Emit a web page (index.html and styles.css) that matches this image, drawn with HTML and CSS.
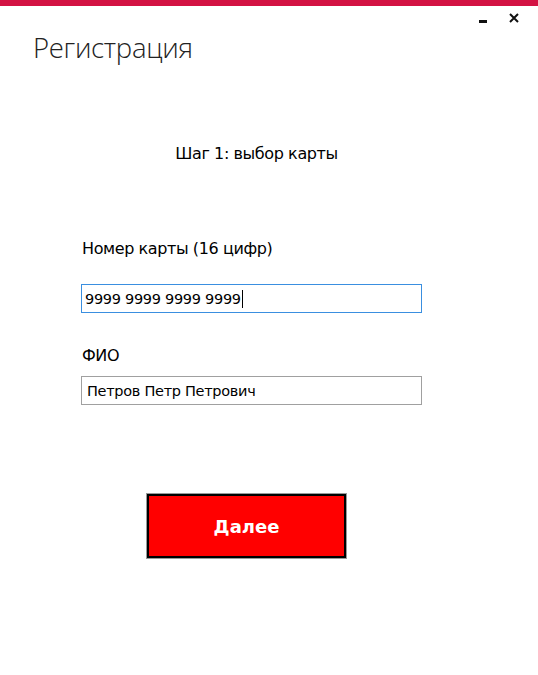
FILE: index.html
```html
<!DOCTYPE html>
<html lang="ru">
<head>
<meta charset="utf-8">
<title>Регистрация</title>
<link rel="stylesheet" href="styles.css">
</head>
<body>
<div class="window">
  <div class="accent"></div>
  <div class="titlebar">
    <h1 class="title">Регистрация</h1>
    <div class="controls">
      <span class="ctl-min"></span>
      <svg class="ctl-close" width="10" height="10" viewBox="0 0 10 10"><path d="M1 1L9 9M9 1L1 9" stroke="#111" stroke-width="2"/></svg>
    </div>
  </div>
  <div class="step">Шаг 1: выбор карты</div>
  <div class="form">
    <label class="label">Номер карты (16 цифр)</label>
    <div class="input focused"><span>9999 9999 9999 9999</span><span class="caret"></span></div>
    <label class="label label-fio">ФИО</label>
    <div class="input input-fio"><span>Петров Петр Петрович</span></div>
  </div>
  <div class="actions">
    <button class="btn">Далее</button>
  </div>
</div>
</body>
</html>
```
FILE: styles.css
```css
html, body {
  margin: 0;
  padding: 0;
  background: #fff;
}
.window {
  width: 538px;
  height: 675px;
  background: #fff;
  font-family: "DejaVu Sans", Tahoma, sans-serif;
  color: #000;
}
.accent {
  height: 6px;
  background: #d31243;
}
.titlebar {
  display: flex;
  justify-content: space-between;
  align-items: flex-start;
  padding: 0 19px 0 33px;
}
.title {
  margin: 24px 0 0;
  font-family: "Open Sans", sans-serif;
  font-weight: 300;
  font-size: 27.5px;
  line-height: 36px;
  color: #222;
  letter-spacing: -0.3px;
}
.controls {
  display: flex;
  align-items: flex-start;
  gap: 22px;
  margin-top: 7px;
}
.ctl-min {
  width: 8px;
  height: 3px;
  background: #111;
  margin-top: 7px;
}
.ctl-close {
  display: block;
}
.step {
  margin-top: 78px;
  text-align: center;
  font-size: 16px;
  line-height: 20px;
  padding-right: 25px;
  letter-spacing: -0.4px;
}
.form {
  display: flex;
  flex-direction: column;
  padding-left: 81px;
  margin-top: 75px;
}
.label {
  font-size: 16px;
  line-height: 20px;
  letter-spacing: -0.4px;
  padding-left: 1px;
}
.label-fio {
  margin-top: 33px;
}
.input {
  box-sizing: border-box;
  width: 341px;
  height: 29px;
  border: 1px solid #a0a0a0;
  display: flex;
  align-items: center;
  padding-left: 3px;
  font-size: 14.5px;
  letter-spacing: -0.3px;
  margin-top: 25px;
}
.input-fio {
  margin-top: 10px;
  padding-left: 5px;
}
.input.focused {
  border-color: #3a8fe0;
}
.caret {
  width: 1px;
  height: 18px;
  background: #000;
  margin-left: 1px;
}
.actions {
  display: flex;
  padding-left: 147px;
  margin-top: 89px;
}
.btn {
  box-sizing: border-box;
  width: 199px;
  height: 64px;
  background: #ff0000;
  border: 2px solid #000;
  outline: 1px solid #999;
  color: #fff;
  font-family: "DejaVu Sans", sans-serif;
  font-weight: bold;
  font-size: 18px;
  margin: 0;
  padding: 0;
}
```
